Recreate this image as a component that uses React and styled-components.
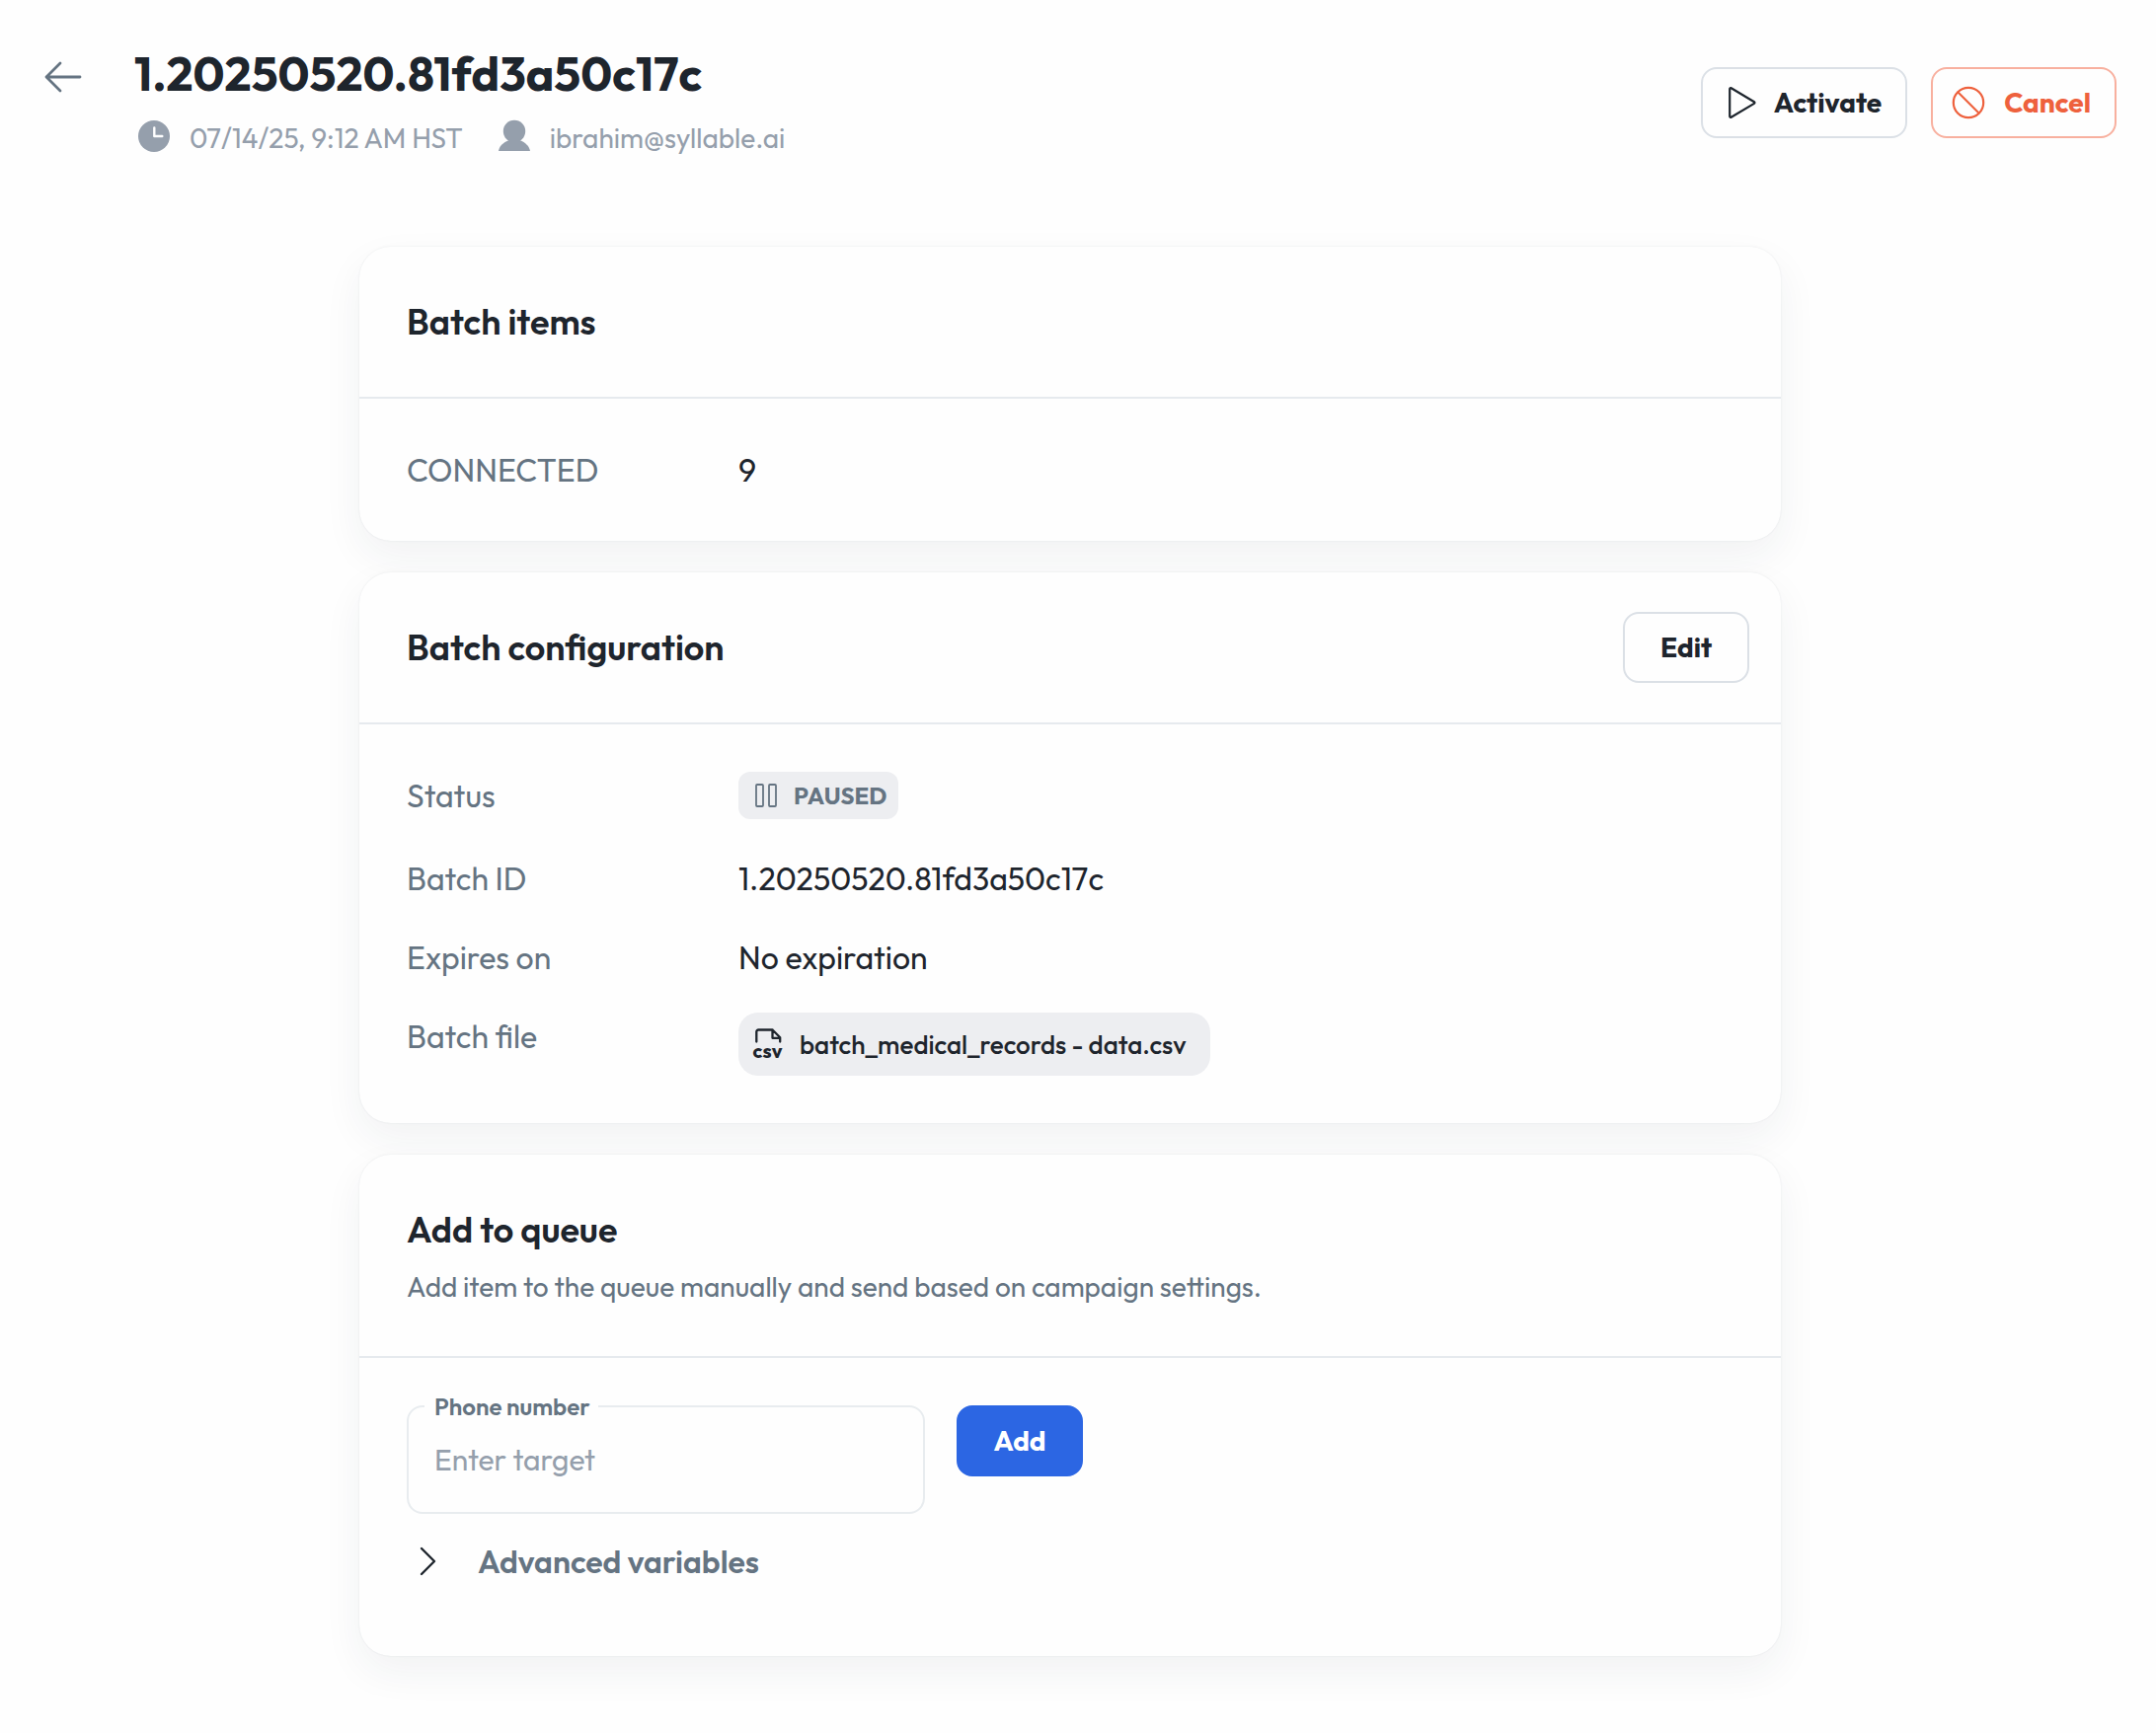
import { useState } from "react";
import styled, { createGlobalStyle, css } from "styled-components";

const details = {
  id: "1.20250520.81fd3a50c17c",
  createdAt: "07/14/25, 9:12 AM HST",
  createdBy: "ibrahim@syllable.ai",
  file: "batch_medical_records - data.csv",
};

export default function App() {
  const [target, setTarget] = useState("");
  const [open, setOpen] = useState(false);

  return (
    <>
      <GlobalStyle />
      <PageHeader>
        <BackButton type="button" aria-label="Back">
          <ArrowIcon />
        </BackButton>
        <Heading>
          <PageTitle>{details.id}</PageTitle>
          <MetaList>
            <MetaItem>
              <ClockIcon />
              {details.createdAt}
            </MetaItem>
            <MetaItem>
              <PersonIcon />
              {details.createdBy}
            </MetaItem>
          </MetaList>
        </Heading>
        <Actions>
          <Button type="button" $icon>
            <PlayIcon />
            Activate
          </Button>
          <Button type="button" $icon $variant="danger">
            <BlockIcon />
            Cancel
          </Button>
        </Actions>
      </PageHeader>

      <Main>
        <Card>
          <CardHeader>
            <CardTitle>Batch items</CardTitle>
          </CardHeader>
          <DetailList>
            <DetailRow>
              <DetailLabel>CONNECTED</DetailLabel>
              <DetailValue>9</DetailValue>
            </DetailRow>
          </DetailList>
        </Card>

        <Card>
          <CardHeader $compact>
            <CardTitle>Batch configuration</CardTitle>
            <Button type="button">Edit</Button>
          </CardHeader>
          <DetailList>
            <DetailRow $tall>
              <DetailLabel>Status</DetailLabel>
              <DetailValue>
                <StatusBadge>
                  <PauseIcon />
                  PAUSED
                </StatusBadge>
              </DetailValue>
            </DetailRow>
            <DetailRow>
              <DetailLabel>Batch ID</DetailLabel>
              <DetailValue>{details.id}</DetailValue>
            </DetailRow>
            <DetailRow>
              <DetailLabel>Expires on</DetailLabel>
              <DetailValue>No expiration</DetailValue>
            </DetailRow>
            <DetailRow>
              <DetailLabel>Batch file</DetailLabel>
              <DetailValue>
                <FileButton type="button">
                  <CsvIcon />
                  {details.file}
                </FileButton>
              </DetailValue>
            </DetailRow>
          </DetailList>
        </Card>

        <Card>
          <CardHeader>
            <div>
              <CardTitle>Add to queue</CardTitle>
              <CardHint>Add item to the queue manually and send based on campaign settings.</CardHint>
            </div>
          </CardHeader>
          <QueueForm onSubmit={(e) => e.preventDefault()}>
            <FormRow>
              <Field>
                <FieldLabel htmlFor="phone">Phone number</FieldLabel>
                <FieldInput
                  id="phone"
                  type="tel"
                  placeholder="Enter target"
                  value={target}
                  onChange={(e) => setTarget(e.target.value)}
                />
              </Field>
              <Button type="submit" $variant="primary">Add</Button>
            </FormRow>
            <Disclosure type="button" aria-expanded={open} onClick={() => setOpen(!open)}>
              <ChevronIcon />
              Advanced variables
            </Disclosure>
          </QueueForm>
        </Card>
      </Main>
    </>
  );
}

function ArrowIcon() {
  return (
    <Icon width="48" height="48" viewBox="0 0 48 48" strokeWidth="2.800">
      <path d="M41 24H7M21 10L7 24l14 14" />
    </Icon>
  );
}

function ClockIcon() {
  return (
    <Icon width="32" height="32" viewBox="0 0 32 32">
      <circle cx="16" cy="16" r="16" fill="currentColor" stroke="none" />
      <path d="M16.300 7.500v8.500h8" stroke="#fefefe" strokeWidth="2.400" />
    </Icon>
  );
}

function PersonIcon() {
  return (
    <Icon width="32" height="32" viewBox="0 0 32 32">
      <circle cx="16" cy="11" r="11.200" fill="currentColor" stroke="none" />
      <path d="M0 31c.8-5 5-9 11-11h10c6 2 10.200 6 11 11z" fill="currentColor" stroke="none" />
    </Icon>
  );
}

function PlayIcon() {
  return (
    <Icon width="40" height="40" viewBox="0 0 40 40" strokeWidth="2.200">
      <path d="M11.200 6v28a1 1 0 0 0 1.500.8L36 20.900a1 1 0 0 0 0-1.700L12.700 5.200a1 1 0 0 0-1.500.8z" />
    </Icon>
  );
}

function BlockIcon() {
  return (
    <Icon width="40" height="40" viewBox="0 0 40 40" strokeWidth="2.200">
      <circle cx="20" cy="20" r="15.200" />
      <path d="M9.500 9.500l21 21" />
    </Icon>
  );
}

function PauseIcon() {
  return (
    <Icon width="24" height="24" viewBox="0 0 24 24" strokeWidth="1.800">
      <rect x="2" y="1" width="7" height="22" rx="1" />
      <rect x="15" y="1" width="7" height="22" rx="1" />
    </Icon>
  );
}

function CsvIcon() {
  return (
    <Icon width="32" height="32" viewBox="0 0 32 32">
      <path
        d="M4.300 13.500V3.500A2 2 0 0 1 6.300 1.500H20.500l7.700 7.700v4.300M20.500 1.500v8.300H28"
        strokeWidth="2.300"
      />
      <CsvText x="15.500" y="30" textAnchor="middle">csv</CsvText>
    </Icon>
  );
}

function ChevronIcon() {
  return (
    <Icon width="32" height="32" viewBox="0 0 32 32" strokeWidth="2.400">
      <path d="M11 3l13 13-13 13" />
    </Icon>
  );
}

const GlobalStyle = createGlobalStyle`
* {
    box-sizing: border-box;
}

body {
    margin: 0;
    background: #fefefe;
    color: #1e252d;
    font-family: Outfit, Lato, sans-serif;
    font-size: 32px;
    line-height: 48px;
}

button, input {
    font-family: inherit;
}

h1, h2, p, ul, dl, dd {
    margin: 0;
    padding: 0;
}
`

const Icon = styled.svg.attrs(props => ({
  fill: "none",
  stroke: "currentColor",
  strokeWidth: props.strokeWidth || 2,
  strokeLinecap: "round",
  strokeLinejoin: "round",
  "aria-hidden": true,
}))`
flex-shrink: 0;
overflow: visible;
`

const CsvText = styled.text`
fill: currentColor;
stroke: none;
font-size: 20px;
font-weight: 700;
`

const PageHeader = styled.header`
display: flex;
align-items: flex-start;
padding: 44px 40px 0;
`

const BackButton = styled.button`
display: flex;
margin: 10px 48px 0 0;
padding: 0;
border: 0;
background: none;
color: #657482;
cursor: pointer;
`

const Heading = styled.div`
flex: 1;
`

const PageTitle = styled.h1`
font-size: 48px;
font-weight: 700;
line-height: 60px;
`

const MetaList = styled.ul`
display: flex;
gap: 36px;
margin-top: 14px;
padding-left: 4px;
list-style: none;
`

const MetaItem = styled.li`
display: flex;
align-items: flex-start;
gap: 20px;
font-size: 28px;
line-height: 44px;
color: #959fac;

svg {
    margin-top: 4px;
}
`

const Actions = styled.div`
display: flex;
gap: 24px;
margin-top: 24px;
`

const Button = styled.button`
display: flex;
align-items: center;
justify-content: center;
gap: 16px;
min-width: 128px;
height: 72px;
padding: ${props => (props.$icon ? "0 24px 0 16px" : "0 24px")};
border: 2px solid #dbe0e6;
border-radius: 16px;
background: #fefefe;
color: #1e252d;
font-size: 28px;
font-weight: 700;
line-height: 40px;
cursor: pointer;

${props =>
    props.$variant === "danger" &&
    css`
      border-color: #f8b09f;
      color: #ee613d;
    `}

${props =>
    props.$variant === "primary" &&
    css`
      border-color: #2c66e3;
      background: #2c66e3;
      color: white;
    `}
`

const Main = styled.main`
display: flex;
flex-direction: column;
gap: 32px;
max-width: 1456px;
margin: 0 auto;
padding: 88px 16px 78px 0;
`

const Card = styled.section`
border-radius: 32px;
background: #fefefe;
box-shadow: 0 0 2px rgba(30, 50, 70, 0.1), 0 16px 40px rgba(30, 50, 70, 0.06);
`

const CardHeader = styled.div`
display: flex;
align-items: center;
justify-content: space-between;
padding: ${props => (props.$compact ? "40px 32px 40px 48px" : "52px 48px")};
border-bottom: 2px solid #e6eaee;
`

const CardTitle = styled.h2`
font-size: 36px;
font-weight: 600;
line-height: 48px;
`

const CardHint = styled.p`
margin-top: 16px;
font-size: 28px;
line-height: 36px;
color: #657482;
`

const DetailList = styled.dl`
display: flex;
flex-direction: column;
gap: 32px;
padding: 48px;
`

const DetailRow = styled.div`
display: grid;
grid-template-columns: 336px 1fr;
align-items: start;
min-height: ${props => (props.$tall ? "52px" : "48px")};
`

const DetailLabel = styled.dt`
color: #657482;
`

const DetailValue = styled.dd`
display: flex;
`

const StatusBadge = styled.span`
display: flex;
align-items: center;
gap: 16px;
padding: 0 12px 0 16px;
border-radius: 12px;
background: #edeef1;
color: #657482;
font-size: 24px;
font-weight: 700;
`

const FileButton = styled.button`
display: flex;
align-items: center;
gap: 16px;
height: 64px;
padding: 0 24px 0 14px;
border: 0;
border-radius: 20px;
background: #edeef1;
color: #1e252d;
font-size: 26px;
font-weight: 500;
cursor: pointer;
`

const QueueForm = styled.form`
padding: 48px 48px 72px;
`

const FormRow = styled.div`
display: flex;
align-items: flex-start;
gap: 32px;
`

const Field = styled.div`
position: relative;
width: 525px;
`

// sits on the top border of the input
const FieldLabel = styled.label`
position: absolute;
top: -15px;
left: 18px;
padding: 0 8px 0 10px;
background: #fefefe;
color: #657482;
font-size: 24px;
font-weight: 600;
line-height: 32px;
`

const FieldInput = styled.input`
display: block;
width: 100%;
height: 110px;
padding: 0 26px;
border: 2px solid #e8ecef;
border-radius: 16px;
background: none;
color: #1e252d;
font-size: 30px;

&::placeholder{
    color: #959fac;
    opacity: 1;
}
`

const Disclosure = styled.button`
display: flex;
align-items: center;
gap: 36px;
margin-top: 24px;
padding: 0 0 0 4px;
border: 0;
background: none;
color: #657482;
font-size: 32px;
font-weight: 600;
line-height: 48px;
cursor: pointer;

svg {
    color: #1e252d;
}
`
